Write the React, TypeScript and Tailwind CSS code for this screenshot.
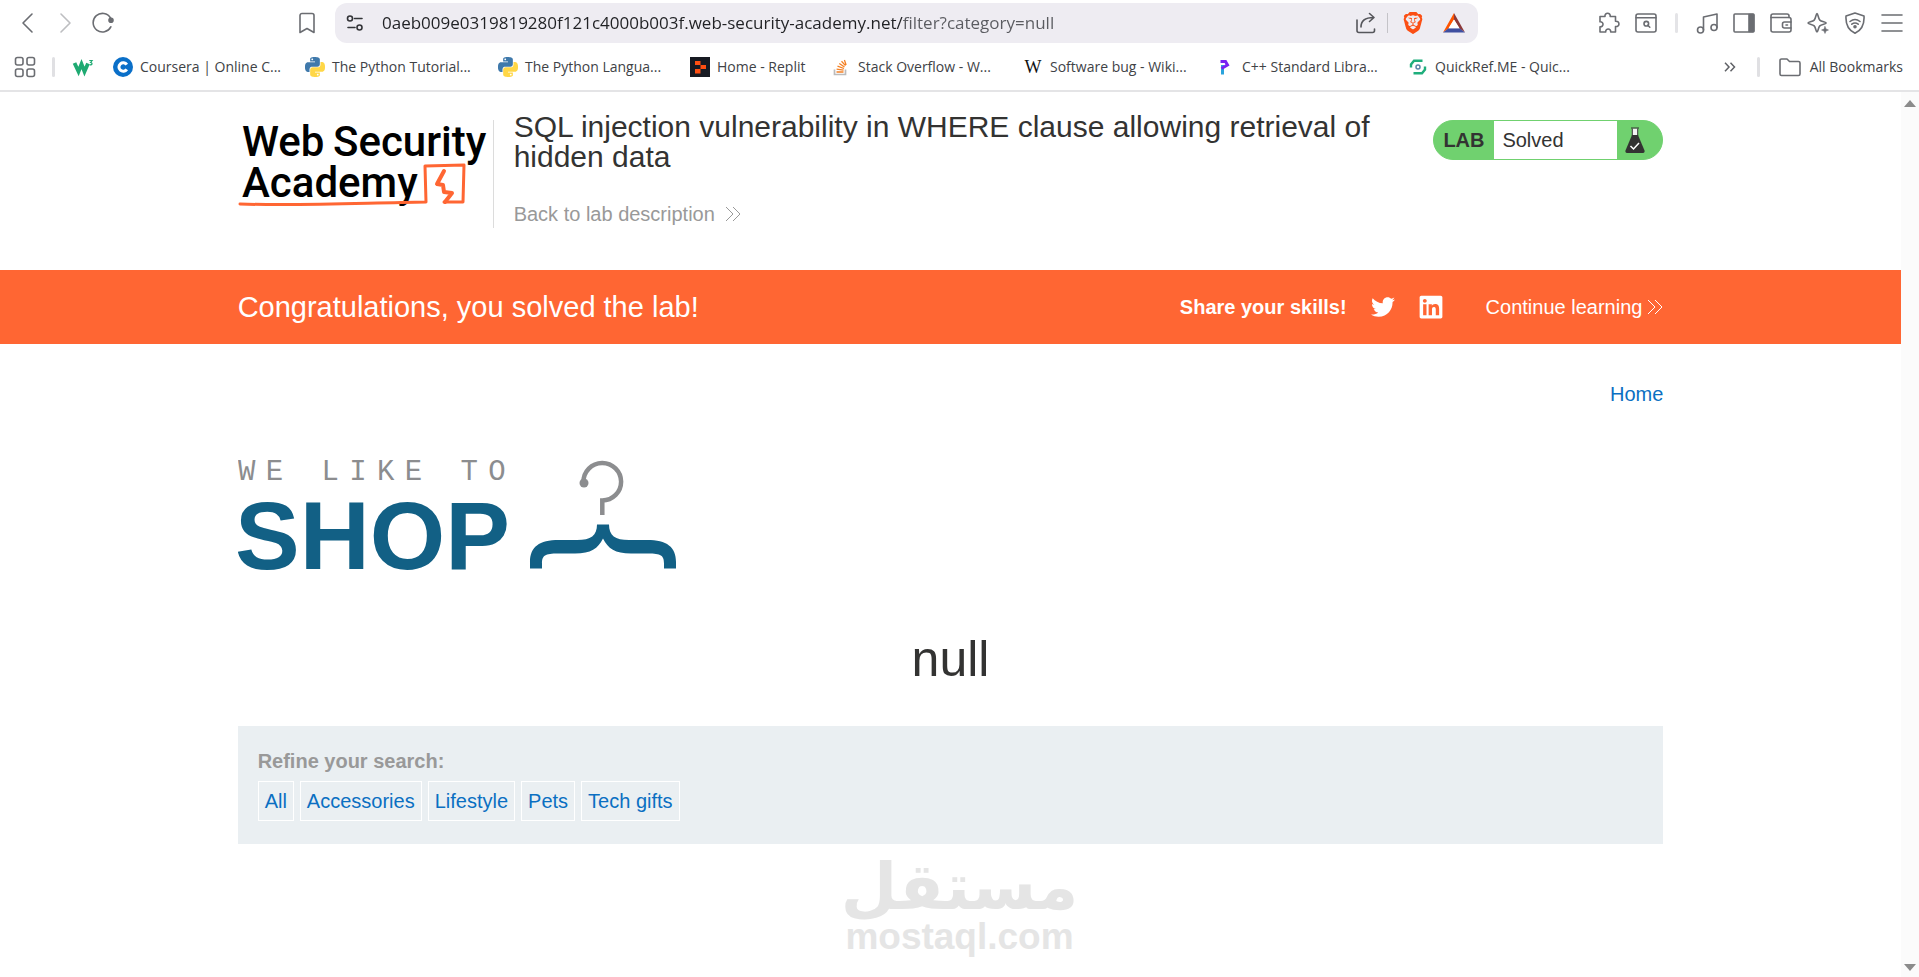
import type { ReactNode } from 'react';
import { FaLinkedin, FaTwitter } from 'react-icons/fa';
import { SiBrave } from 'react-icons/si';

const CATEGORIES = ['All', 'Accessories', 'Lifestyle', 'Pets', 'Tech gifts'];

type IconProps = { children: ReactNode; className?: string };

function Icon({ children, className = 'text-[#6b6d72]' }: IconProps) {
  return (
    <svg
      viewBox="0 0 22 22"
      className={`h-[22px] w-[22px] shrink-0 ${className}`}
      fill="none"
      stroke="currentColor"
      strokeWidth="1.6"
      strokeLinecap="round"
      strokeLinejoin="round"
      aria-hidden="true"
    >
      {children}
    </svg>
  );
}

function ToolButton({ label, children }: { label: string; children: ReactNode }) {
  return (
    <button type="button" aria-label={label} className="shrink-0">
      <Icon>{children}</Icon>
    </button>
  );
}

function Chevrons() {
  return (
    <svg viewBox="0 0 16 16" className="h-4 w-4 shrink-0" fill="none" stroke="currentColor" aria-hidden="true">
      <path d="M1 1l7 7-7 7M8 1l7 7-7 7" />
    </svg>
  );
}

function PythonIcon() {
  return (
    <svg viewBox="0 0 24 24" className="h-5 w-5" aria-hidden="true">
      <path
        fill="#3f79ab"
        d="M14.25.18l.9.2.73.26.59.3.45.32.34.34.25.34.16.33.1.3.04.26.02.2-.01.13V8.5l-.05.63-.13.55-.21.46-.26.38-.3.31-.33.25-.35.19-.35.14-.33.1-.3.07-.26.04-.21.02H8.77l-.69.05-.59.14-.5.22-.41.27-.33.32-.27.35-.2.36-.15.37-.1.35-.07.32-.04.27-.02.21v3.06H3.17l-.21-.03-.28-.07-.32-.12-.35-.18-.36-.26-.36-.36-.35-.46-.32-.59-.28-.73-.21-.88-.14-1.05-.05-1.23.06-1.22.16-1.04.24-.87.32-.71.36-.57.4-.44.42-.33.42-.24.4-.16.36-.1.32-.05.24-.01h.16l.06.01h8.16v-.83H6.18l-.01-2.75-.02-.37.05-.34.11-.31.17-.28.25-.26.31-.23.38-.2.44-.18.51-.15.58-.12.64-.1.71-.06.77-.04.84-.02 1.27.05zm-6.3 1.98l-.23.33-.08.41.08.41.23.34.33.22.41.09.41-.09.33-.22.23-.34.08-.41-.08-.41-.23-.33-.33-.22-.41-.09-.41.09z"
      />
      <path
        fill="#ffd747"
        d="M21.04 6.11l.28.06.32.12.35.18.36.27.36.35.35.47.32.59.28.73.21.88.14 1.04.05 1.23-.06 1.23-.16 1.04-.24.86-.32.71-.36.57-.4.45-.42.33-.42.24-.4.16-.36.09-.32.05-.24.02-.16-.01h-8.22v.82h5.84l.01 2.76.02.36-.05.34-.11.31-.17.29-.25.25-.31.24-.38.2-.44.17-.51.15-.58.13-.64.09-.71.07-.77.04-.84.01-1.27-.04-1.07-.14-.9-.2-.73-.25-.59-.3-.45-.33-.34-.34-.25-.34-.16-.33-.1-.3-.04-.25-.02-.2.01-.13v-5.34l.05-.64.13-.54.21-.46.26-.38.3-.32.33-.24.35-.2.35-.14.33-.1.3-.06.26-.04.21-.02.13-.01h5.84l.69-.05.59-.14.5-.21.41-.28.33-.32.27-.35.2-.36.15-.36.1-.35.07-.32.04-.28.02-.21V6.07h2.09l.14.01zm-6.47 14.25l-.23.33-.08.41.08.41.23.33.33.23.41.08.41-.08.33-.23.23-.33.08-.41-.08-.41-.23-.33-.33-.23-.41-.08-.41.08z"
      />
    </svg>
  );
}

function CourseraIcon() {
  return (
    <svg viewBox="0 0 20 20" className="h-5 w-5" aria-hidden="true">
      <circle cx="10" cy="10" r="10" fill="#0a6fc8" />
      <path d="M13.8 7.6A4.3 4.3 0 1 0 13.8 12.4" fill="none" stroke="#fff" strokeWidth="3" />
    </svg>
  );
}

function ReplitIcon() {
  return (
    <svg viewBox="0 0 20 20" className="h-5 w-5" aria-hidden="true">
      <rect width="20" height="20" fill="#171a22" />
      <path d="M5 4h5.500v4H5zM10.500 8H16v4h-5.500zM5 12h5.500v4.500H5z" fill="#ff4f12" />
    </svg>
  );
}

function StackOverflowIcon() {
  return (
    <svg viewBox="0 0 20 20" className="h-5 w-5" fill="none" strokeWidth="1.700" aria-hidden="true">
      <path d="M3.500 12.500v5h11v-5" stroke="#bcbbbb" />
      <path d="M5.500 15h7M5.600 12.200l7 .9M6.500 9.200l6.500 2.300M8.300 6.500l5.200 3.500M10.500 4.200l4 4.400M13.400 3l1.700 5" stroke="#f48024" strokeWidth="1.300" />
    </svg>
  );
}

function WikipediaIcon() {
  return (
    <svg viewBox="0 0 20 20" className="h-5 w-5" aria-hidden="true">
      <text x="10" y="16" textAnchor="middle" fontSize="18" fill="#111" className="font-['Liberation_Serif',serif]">
        W
      </text>
    </svg>
  );
}

function CppIcon() {
  return (
    <svg viewBox="0 0 20 20" className="h-5 w-5" fill="none" strokeWidth="3" aria-hidden="true">
      <path d="M7.500 17.500V8" stroke="#2aa3dc" />
      <path d="M5.500 4.500h5l2 3.500-6 3.500" stroke="#7a22f2" />
    </svg>
  );
}

function QuickRefIcon() {
  return (
    <svg viewBox="0 0 20 20" className="h-5 w-5" fill="none" stroke="#1fae7c" strokeWidth="2.400" aria-hidden="true">
      <path d="M3 10.500V7.500L6 3.700h8.500" />
      <path d="M17 9.500v3l-3 3.800H5.500" />
      <circle cx="10" cy="10" r="2" stroke="#5b83a8" strokeWidth="1.500" />
    </svg>
  );
}

const BOOKMARKS = [
  { label: 'Coursera | Online C...', icon: <CourseraIcon />, width: 'w-[192px]' },
  { label: 'The Python Tutorial...', icon: <PythonIcon />, width: 'w-[193px]' },
  { label: 'The Python Langua...', icon: <PythonIcon />, width: 'w-[192px]' },
  { label: 'Home - Replit', icon: <ReplitIcon />, width: 'w-[141px]' },
  { label: 'Stack Overflow - W...', icon: <StackOverflowIcon />, width: 'w-[192px]' },
  { label: 'Software bug - Wiki...', icon: <WikipediaIcon />, width: 'w-[192px]' },
  { label: 'C++ Standard Libra...', icon: <CppIcon />, width: 'w-[193px]' },
  { label: 'QuickRef.ME - Quic...', icon: <QuickRefIcon />, width: 'w-[192px]' },
];

function Toolbar() {
  return (
    <div className="flex h-11 items-center pt-[2px] pr-4 pl-4">
      <div className="flex items-center gap-4">
        <ToolButton label="Back">
          <path d="M16 2L7 11l9 9" />
        </ToolButton>
        <button type="button" aria-label="Forward" disabled>
          <Icon className="text-[#bdbec1]">
            <path d="M7 2l9 9-9 9" />
          </Icon>
        </button>
        <ToolButton label="Reload">
          <path d="M18.800 14.800A9.300 9.300 0 1 1 18.500 6" />
          <circle cx="19" cy="8.300" r="2" fill="currentColor" />
        </ToolButton>
      </div>
      <button type="button" aria-label="Bookmark this page" className="ml-[182px]">
        <Icon>
          <path d="M4 20.500V3.500a2 2 0 0 1 2-2h10a2 2 0 0 1 2 2v17l-7-4z" />
        </Icon>
      </button>

      <form className="ml-[17px] flex h-10 flex-1 items-center rounded-xl bg-[#eeecf2] pr-3 pl-[9px]">
        <Icon className="text-[#333438]">
          <circle cx="6" cy="6.500" r="2.500" />
          <path d="M10.500 6.500H18M4 15.500h7" />
          <circle cx="15.500" cy="15.500" r="2.500" />
        </Icon>
        <input
          aria-label="Address"
          defaultValue="0aeb009e0319819280f121c4000b003f.web-security-academy.net/filter?category=null"
          className="ml-4 min-w-0 flex-1 bg-[linear-gradient(to_right,#202124_522px,#5a5b60_522px)] bg-clip-text font-['Open_Sans',sans-serif] text-[17px] text-transparent outline-none"
        />
        <div className="flex items-center gap-[10px]">
          <button type="button" aria-label="Share">
            <Icon className="text-[#55565b]">
              <path d="M2 8v10.500a2 2 0 0 0 2 2h13.500a2 2 0 0 0 2-2V17" />
              <path d="M6 15c0-6 4-9.500 12.500-9.500M14.500 1.500l4.500 4-4.500 4" />
            </Icon>
          </button>
          <span className="h-5 w-px bg-[#c4c3c8]" />
          <button type="button" aria-label="Brave Shields" className="ml-1">
            <SiBrave className="h-[22px] w-[22px] text-[#fb4f14]" />
          </button>
          <button type="button" aria-label="Brave Rewards" className="ml-2">
            <svg viewBox="0 0 24 22" className="h-[22px] w-6" aria-hidden="true">
              <path d="M12 1L1 20.500l5.500-4L12 7.500z" fill="#ff5500" />
              <path d="M12 1l11 19.500-5.500-4L12 7.500z" fill="#8c3a3a" />
              <path d="M1 20.500h22l-5.500-4.200h-11z" fill="#3f4fa0" />
              <path d="M12 7.500l5.500 8.800h-11z" fill="#fff" />
            </svg>
          </button>
        </div>
      </form>

      <div className="ml-[120px] flex items-center gap-[15px]">
        <ToolButton label="Extensions">
          <path d="M2 4.500h5c-.8-4.300 6-4.300 5.200 0H17.500v4.700c4.600-.4 4.600 5.800 0 5.300v5.500h-4.800c.4-4-5.400-4-5 0H2v-5.200c4 .4 4-5.400 0-5z" />
        </ToolButton>
        <ToolButton label="Search tabs">
          <rect x="1" y="2" width="20" height="18" rx="2" />
          <path d="M1 5.800h20M14.800 15.200l-2-2" />
          <circle cx="11.300" cy="11.700" r="2.300" />
        </ToolButton>
        <span className="mx-[3px] h-5 w-[3px] rounded bg-[#e4e4e7]" />
        <ToolButton label="Playlist">
          <path d="M7.500 18V5L21 2v13.500" />
          <circle cx="4.500" cy="18" r="3" />
          <circle cx="18" cy="15.500" r="3" />
        </ToolButton>
        <ToolButton label="Sidebar">
          <rect x="1" y="2" width="20" height="18" rx="1" />
          <path d="M16 2.500h4.500v17H16z" fill="currentColor" />
        </ToolButton>
        <ToolButton label="Wallet">
          <path d="M21 10V7.500a2 2 0 0 0-2-2H1V18a2 2 0 0 0 2 2h16a2 2 0 0 0 2-2v-2" />
          <path d="M1 5.500V4a2 2 0 0 1 2-2h14a2 2 0 0 1 2 2v1.500M21 10h-6.500a2 2 0 0 0-2 2v2a2 2 0 0 0 2 2H21zM16 13h1.500" />
        </ToolButton>
        <ToolButton label="Leo AI">
          <path d="M10 1.500c1 0 1.200 5 2.800 6.600 1.600 1.600 6.400 1.800 6.400 2.900s-4.800 1.300-6.400 2.900C11.200 15.500 11 20 10 20s-1.200-4.500-2.800-6.100C5.600 12.300 1 12 1 11s4.600-1.300 6.200-2.900C8.800 6.500 9 1.500 10 1.500z" />
          <path d="M18 14.500l1 2.500 2.500 1-2.500 1-1 2.500-1-2.500-2.500-1 2.500-1z" fill="currentColor" strokeWidth="0.500" />
        </ToolButton>
        <ToolButton label="VPN">
          <path d="M11 1l9 3c.5 8-2 14-9 17.200C4 18 1.500 12 2 4z" />
          <path d="M6 9.500c3-2.400 7-2.400 10 0M7.800 12.200c2-1.500 4.400-1.500 6.400 0" />
          <circle cx="11" cy="14.700" r="1" fill="currentColor" />
        </ToolButton>
        <ToolButton label="Menu">
          <path d="M1 3h20M1 11h20M1 19h20" />
        </ToolButton>
      </div>
    </div>
  );
}

function BookmarksBar() {
  return (
    <nav className="flex h-12 items-center border-b-2 border-[#e4e4e6] pr-4 pl-[14px] font-['Open_Sans',sans-serif] text-sm text-[#404246]">
      <ToolButton label="Apps">
        <rect x="1.500" y="1.500" width="7.500" height="7.500" rx="2" />
        <rect x="13" y="1.500" width="7.500" height="7.500" rx="2" />
        <rect x="1.500" y="13" width="7.500" height="7.500" rx="2" />
        <rect x="13" y="13" width="7.500" height="7.500" rx="2" />
      </ToolButton>
      <span className="ml-4 h-5 w-[3px] rounded bg-[#e0e0e3]" />
      <a href="#" aria-label="W3Schools" className="ml-[18px] w-10">
        <svg viewBox="0 0 20 20" className="h-5 w-5 overflow-visible" fill="none" stroke="#1faa72" aria-hidden="true">
          <path d="M1.500 6l4 8.500L8.500 7l3 7.500 3.500-8" strokeWidth="3.800" />
          <path d="M16.300 3.500h2.800l-1.500 2c2.300.2 1.700 3-1 2.200" strokeWidth="1.200" />
        </svg>
      </a>
      {BOOKMARKS.map((b) => (
        <a key={b.label} href="#" className={`flex shrink-0 items-center gap-[7px] whitespace-nowrap ${b.width}`}>
          {b.icon}
          {b.label}
        </a>
      ))}
      <button type="button" aria-label="More bookmarks" className="ml-auto">
        <svg viewBox="0 0 12 10" className="h-[10px] w-3" fill="none" stroke="#5f6166" strokeWidth="1.500" aria-hidden="true">
          <path d="M1 .8L5 5 1 9.200M6.500.8l4 4.200-4 4.200" />
        </svg>
      </button>
      <span className="ml-[21px] h-5 w-[3px] rounded bg-[#e0e0e3]" />
      <button type="button" className="ml-[19px] flex items-center gap-[9px] whitespace-nowrap">
        <Icon>
          <path d="M1 4.500a1.500 1.500 0 0 1 1.500-1.500H8l2.500 2.500h9A1.500 1.500 0 0 1 21 7v11a1.500 1.500 0 0 1-1.500 1.500h-17A1.500 1.500 0 0 1 1 18z" />
        </Icon>
        All Bookmarks
      </button>
    </nav>
  );
}

function AcademyLogo() {
  return (
    <a href="#" aria-label="Web Security Academy">
      <svg viewBox="0 0 255 108" className="h-[108px] w-[255px]" aria-hidden="true">
        <g className="font-['Roboto',sans-serif] font-medium" fontSize="42" fill="#000">
          <text x="4" y="36">Web</text>
          <text x="95" y="36">Security</text>
          <text x="4" y="77">Academy</text>
        </g>
        <g fill="none" stroke="#ff6633" strokeWidth="3" strokeLinejoin="round" strokeLinecap="round">
          <path d="M2 84c60 2 120-1 186-2l-1-36 39-1-1 37h-19" />
          <path d="M206 51l-7 13 6 1 1 7 8 1-7 9" strokeWidth="4" />
        </g>
      </svg>
    </a>
  );
}

function LabStatus() {
  return (
    <div className="mt-2 flex h-10 w-[230px] shrink-0 items-stretch overflow-hidden rounded-[20px] border border-[#70d16f] bg-[#70d16f] text-xl text-[#333332]">
      <span className="flex w-[60px] items-center pl-[9px] font-bold">LAB</span>
      <p className="flex flex-1 items-center bg-white pl-2">Solved</p>
      <span className="flex w-[45px] items-center pl-2">
        <svg viewBox="0 0 20 26" className="h-[26px] w-5" aria-hidden="true">
          <path d="M7 1.500v9h6v-9z" fill="#f4f4f4" />
          <path d="M6 1h8M7.300 1.500V9M12.700 1.500V9" stroke="#333332" strokeWidth="1" />
          <path d="M7 8h6l6.500 15.500c.5 1.500-.3 2.500-1.500 2.500H2C.8 26 0 25 .5 23.500z" fill="#333332" />
          <path d="M5.500 19l3 3 5.500-6" fill="none" stroke="#fff" strokeWidth="1.500" />
        </svg>
      </span>
    </div>
  );
}

function ShopLogo() {
  return (
    <svg viewBox="0 0 440 112" className="h-28 w-[440px]" role="img" aria-label="We like to shop">
      <text x="0" y="20" fontSize="29" letterSpacing="10.400" fill="#8c8d8f" className="font-['Liberation_Mono',monospace]">
        WE LIKE TO
      </text>
      <text x="-3" y="109" fontSize="97" fill="#126085" className="font-['Liberation_Sans',sans-serif] font-bold">
        SHOP
      </text>
      <circle cx="346" cy="23" r="4.500" fill="#8c8d8f" />
      <path d="M345.500 22a18.800 18.800 0 1 1 18.800 18.500V55" fill="none" stroke="#8c8d8f" strokeWidth="4.500" />
      <path
        fill="#126085"
        d="M359 64.500h12c0 11 6 15.500 20 15.500h18c20 0 29 7 29 22v6.500h-12v-5c0-8-3-10-16-10h-17c-16 0-23-5-28-15-5 10-12 15-28 15h-17c-13 0-16 2-16 10v5h-12v-6.500c0-15 9-22 29-22h18c14 0 20-4.500 20-15.500z"
      />
    </svg>
  );
}

function Watermark() {
  return (
    <div className="pointer-events-none absolute bottom-5 left-1/2 flex -translate-x-1/2 flex-col items-center text-[#e5e5e5]">
      <span dir="rtl" lang="ar" className="font-['DejaVu_Sans',sans-serif] text-[65px] leading-[61px] font-bold">
        مستقل
      </span>
      <span className="font-['Liberation_Sans',sans-serif] text-[37px] leading-10 font-bold">mostaql.com</span>
    </div>
  );
}

export default function App() {
  return (
    <div className="relative flex min-h-screen flex-col bg-white font-['Liberation_Sans',sans-serif] text-xl leading-6 text-[#333332]">
      <Toolbar />
      <BookmarksBar />

      <div className="flex flex-1">
        <div className="min-w-0 flex-1">
          <header className="mx-auto flex w-3/4 pt-5 pb-[42px]">
            <div className="mt-2 shrink-0 border-r border-[#dcdcdc]">
              <AcademyLogo />
            </div>
            <div className="flex-1 pr-5 pl-5">
              <h2 className="text-[30px] leading-[30px]">
                SQL injection vulnerability in WHERE clause allowing retrieval of hidden data
              </h2>
              <a href="#" className="mt-[30px] inline-flex items-center gap-[10px] text-[#999999]">
                Back to lab description
                <Chevrons />
              </a>
            </div>
            <LabStatus />
          </header>

          <section className="bg-[#ff6633] text-white">
            <div className="mx-auto flex h-[74px] w-3/4 items-center">
              <h4 className="flex-1 text-[29px]">Congratulations, you solved the lab!</h4>
              <span className="font-bold">Share your skills!</span>
              <a href="#" aria-label="Twitter" className="ml-6">
                <FaTwitter className="h-6 w-6" />
              </a>
              <a href="#" aria-label="LinkedIn" className="ml-6">
                <FaLinkedin className="h-[26px] w-6" preserveAspectRatio="xMidYMid meet" />
              </a>
              <a href="#" className="ml-[43px] flex items-center gap-[5px]">
                Continue learning
                <Chevrons />
              </a>
            </div>
          </section>

          <main className="mx-auto w-3/4">
            <nav className="flex justify-end pt-[38px]">
              <a href="#" className="text-[#0b6fc2]">
                Home
              </a>
            </nav>
            <div className="pt-[54px]">
              <ShopLogo />
            </div>
            <h1 className="pt-[62px] text-center text-[50px] leading-[50px]">null</h1>
            <section className="mt-[42px] bg-[#eaeff2] px-5 pt-[23px] pb-[23px]">
              <p className="font-bold text-[#999999]">Refine your search:</p>
              <div className="mt-2 flex gap-[6px]">
                {CATEGORIES.map((name) => (
                  <a
                    key={name}
                    href="#"
                    className="flex h-10 items-center border border-white px-[6px] text-[#0b6fc2]"
                  >
                    {name}
                  </a>
                ))}
              </div>
            </section>
          </main>
        </div>

        {/* scrollbar track */}
        <div className="flex w-[18px] shrink-0 flex-col items-center justify-between bg-[#fbfbfb] pt-2 pb-[6px] text-[#8b8b8b]">
          <svg viewBox="0 0 12 7" className="h-[7px] w-3" fill="currentColor" aria-hidden="true">
            <path d="M6 0l6 7H0z" />
          </svg>
          <svg viewBox="0 0 12 7" className="h-[7px] w-3" fill="currentColor" aria-hidden="true">
            <path d="M0 0h12L6 7z" />
          </svg>
        </div>
      </div>

      <Watermark />
    </div>
  );
}
